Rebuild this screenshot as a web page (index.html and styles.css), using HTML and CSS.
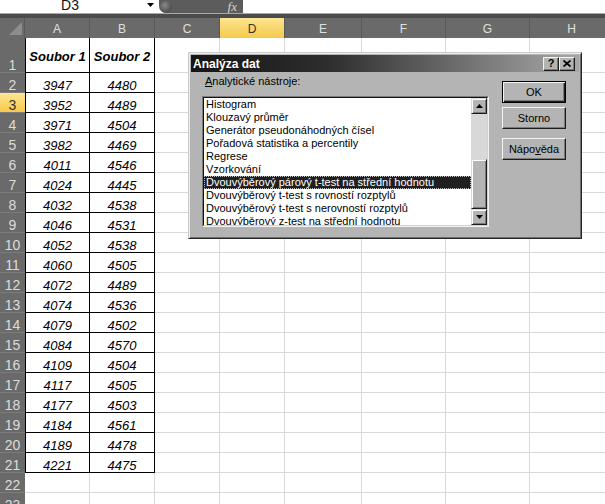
FILE: index.html
```html
<!DOCTYPE html>
<html lang="cs">
<head>
<meta charset="utf-8">
<title>Analýza dat</title>
<link rel="stylesheet" href="styles.css">
</head>
<body>
<div class="fbar">
  <div class="namebox"><span class="nb-text">D3</span><svg class="nb-arrow" width="7" height="4" viewBox="0 0 7 4"><path d="M0 0h7L3.5 4z" fill="#000"/></svg></div>
  <div class="pill"><span class="knob"></span><span class="fx">fx</span></div>
  <div class="finput"></div>
</div>
<div class="band"></div>
<div class="sheet">
  <div class="row hdr"><div class="corner"><i></i></div><div class="ch">A</div><div class="ch">B</div><div class="ch">C</div><div class="ch sel">D</div><div class="ch">E</div><div class="ch">F</div><div class="ch">G</div><div class="ch">H</div></div>
  <div class="row r1"><div class="rh">1</div><div class="c t a h">Soubor 1</div><div class="c t h">Soubor 2</div><div class="c"></div><div class="c"></div><div class="c"></div><div class="c"></div><div class="c"></div><div class="c"></div></div>
  <div class="row"><div class="rh">2</div><div class="c t a">3947</div><div class="c t">4480</div><div class="c"></div><div class="c"></div><div class="c"></div><div class="c"></div><div class="c"></div><div class="c"></div></div>
  <div class="row"><div class="rh sel">3</div><div class="c t a">3952</div><div class="c t">4489</div><div class="c"></div><div class="c"></div><div class="c"></div><div class="c"></div><div class="c"></div><div class="c"></div></div>
  <div class="row"><div class="rh">4</div><div class="c t a">3971</div><div class="c t">4504</div><div class="c"></div><div class="c"></div><div class="c"></div><div class="c"></div><div class="c"></div><div class="c"></div></div>
  <div class="row"><div class="rh">5</div><div class="c t a">3982</div><div class="c t">4469</div><div class="c"></div><div class="c"></div><div class="c"></div><div class="c"></div><div class="c"></div><div class="c"></div></div>
  <div class="row"><div class="rh">6</div><div class="c t a">4011</div><div class="c t">4546</div><div class="c"></div><div class="c"></div><div class="c"></div><div class="c"></div><div class="c"></div><div class="c"></div></div>
  <div class="row"><div class="rh">7</div><div class="c t a">4024</div><div class="c t">4445</div><div class="c"></div><div class="c"></div><div class="c"></div><div class="c"></div><div class="c"></div><div class="c"></div></div>
  <div class="row"><div class="rh">8</div><div class="c t a">4032</div><div class="c t">4538</div><div class="c"></div><div class="c"></div><div class="c"></div><div class="c"></div><div class="c"></div><div class="c"></div></div>
  <div class="row"><div class="rh">9</div><div class="c t a">4046</div><div class="c t">4531</div><div class="c"></div><div class="c"></div><div class="c"></div><div class="c"></div><div class="c"></div><div class="c"></div></div>
  <div class="row"><div class="rh">10</div><div class="c t a">4052</div><div class="c t">4538</div><div class="c"></div><div class="c"></div><div class="c"></div><div class="c"></div><div class="c"></div><div class="c"></div></div>
  <div class="row"><div class="rh">11</div><div class="c t a">4060</div><div class="c t">4505</div><div class="c"></div><div class="c"></div><div class="c"></div><div class="c"></div><div class="c"></div><div class="c"></div></div>
  <div class="row"><div class="rh">12</div><div class="c t a">4072</div><div class="c t">4489</div><div class="c"></div><div class="c"></div><div class="c"></div><div class="c"></div><div class="c"></div><div class="c"></div></div>
  <div class="row"><div class="rh">13</div><div class="c t a">4074</div><div class="c t">4536</div><div class="c"></div><div class="c"></div><div class="c"></div><div class="c"></div><div class="c"></div><div class="c"></div></div>
  <div class="row"><div class="rh">14</div><div class="c t a">4079</div><div class="c t">4502</div><div class="c"></div><div class="c"></div><div class="c"></div><div class="c"></div><div class="c"></div><div class="c"></div></div>
  <div class="row"><div class="rh">15</div><div class="c t a">4084</div><div class="c t">4570</div><div class="c"></div><div class="c"></div><div class="c"></div><div class="c"></div><div class="c"></div><div class="c"></div></div>
  <div class="row"><div class="rh">16</div><div class="c t a">4109</div><div class="c t">4504</div><div class="c"></div><div class="c"></div><div class="c"></div><div class="c"></div><div class="c"></div><div class="c"></div></div>
  <div class="row"><div class="rh">17</div><div class="c t a">4117</div><div class="c t">4505</div><div class="c"></div><div class="c"></div><div class="c"></div><div class="c"></div><div class="c"></div><div class="c"></div></div>
  <div class="row"><div class="rh">18</div><div class="c t a">4177</div><div class="c t">4503</div><div class="c"></div><div class="c"></div><div class="c"></div><div class="c"></div><div class="c"></div><div class="c"></div></div>
  <div class="row"><div class="rh">19</div><div class="c t a">4184</div><div class="c t">4561</div><div class="c"></div><div class="c"></div><div class="c"></div><div class="c"></div><div class="c"></div><div class="c"></div></div>
  <div class="row"><div class="rh">20</div><div class="c t a">4189</div><div class="c t">4478</div><div class="c"></div><div class="c"></div><div class="c"></div><div class="c"></div><div class="c"></div><div class="c"></div></div>
  <div class="row"><div class="rh">21</div><div class="c t a">4221</div><div class="c t">4475</div><div class="c"></div><div class="c"></div><div class="c"></div><div class="c"></div><div class="c"></div><div class="c"></div></div>
  <div class="row"><div class="rh">22</div><div class="c"></div><div class="c"></div><div class="c"></div><div class="c"></div><div class="c"></div><div class="c"></div><div class="c"></div><div class="c"></div></div>
  <div class="row"><div class="rh">23</div><div class="c"></div><div class="c"></div><div class="c"></div><div class="c"></div><div class="c"></div><div class="c"></div><div class="c"></div><div class="c"></div></div>
</div>

<div class="dialog">
  <div class="titlebar">
    <span class="title">Analýza dat</span>
    <span class="tbtn">?</span>
    <span class="tbtn"><svg width="8" height="7" viewBox="0 0 8 7"><path d="M0.5 0.5L7.5 6.5M7.5 0.5L0.5 6.5" stroke="#000" stroke-width="1.8"/></svg></span>
  </div>
  <div class="dbody">
    <div class="left">
      <div class="label"><u>A</u>nalytické nástroje:</div>
      <div class="listbox">
        <div class="listinner">
          <div class="items">
            <div class="item">Histogram</div>
            <div class="item">Klouzavý průměr</div>
            <div class="item">Generátor pseudonáhodných čísel</div>
            <div class="item">Pořadová statistika a percentily</div>
            <div class="item">Regrese</div>
            <div class="item">Vzorkování</div>
            <div class="item sel">Dvouvýběrový párový t-test na střední hodnotu</div>
            <div class="item">Dvouvýběrový t-test s rovností rozptylů</div>
            <div class="item">Dvouvýběrový t-test s nerovností rozptylů</div>
            <div class="item">Dvouvýběrový z-test na střední hodnotu</div>
          </div>
          <div class="sb">
            <div class="sbtn"><svg width="7" height="4" viewBox="0 0 7 4"><path d="M0 4h7L3.5 0z" fill="#000"/></svg></div>
            <div class="track"></div>
            <div class="thumb"></div>
            <div class="sbtn"><svg width="7" height="4" viewBox="0 0 7 4"><path d="M0 0h7L3.5 4z" fill="#000"/></svg></div>
          </div>
        </div>
      </div>
    </div>
    <div class="right">
      <div class="btn def">OK</div>
      <div class="btn">Storno</div>
      <div class="btn gap">Nápo<u>v</u>ěda</div>
    </div>
  </div>
</div>
</body>
</html>
```
FILE: styles.css
```css
* { box-sizing: border-box; }
html, body { margin: 0; padding: 0; }
body {
  width: 605px;
  height: 504px;
  overflow: hidden;
  background: #fff;
  position: relative;
  font-family: "Liberation Sans", Arial, sans-serif;
}

/* formula bar */
.fbar {
  display: flex;
  height: 14px;
  border-bottom: 1px solid #a9a9a9;
  background: #fff;
  overflow: hidden;
}
.namebox {
  width: 159px;
  display: flex;
  align-items: flex-start;
}
.nb-text {
  width: 140px;
  text-align: center;
  font-size: 14px;
  line-height: 10px;
  color: #111;
}
.nb-arrow { margin: 3px 0 0 7px; }
.pill {
  width: 84px;
  height: 13px;
  background: #5c5c5c;
  border-radius: 0 0 0 7px;
  display: flex;
  align-items: center;
  justify-content: space-between;
  padding: 0 6px 0 1px;
}
.knob {
  width: 12px;
  height: 12px;
  border-radius: 50%;
  background: radial-gradient(circle at 40% 35%, #8a8a8a 0%, #555 60%, #444 100%);
}
.fx {
  font-family: "Liberation Serif", serif;
  font-style: italic;
  font-size: 13px;
  line-height: 10px;
  color: #d6d6d6;
}
.finput { flex: 1; }
.band { height: 4px; background: #4b4b4b; }

/* sheet */
.sheet { width: 614px; }
.row {
  display: grid;
  grid-template-columns: 25px 65px 65px 65px 65px 77px 84px 84px 84px;
  height: 20px;
}
.row.r1 { height: 35px; }
.hdr { background: #6a6a6a; }
.corner {
  border-right: 1px solid #595959;
  display: flex;
  align-items: flex-end;
  justify-content: flex-end;
  padding: 0 2px 3px 0;
}
.corner i {
  display: block;
  width: 13px;
  height: 13px;
  background: #8d8d8d;
  clip-path: polygon(100% 0, 100% 100%, 0 100%);
}
.ch {
  border-right: 1px solid #595959;
  color: #e0e0e0;
  font-size: 12px;
  display: flex;
  align-items: center;
  justify-content: center;
  padding-top: 1px;
}
.ch.sel {
  background: linear-gradient(#fde592, #f6c94a);
  color: #333;
}
.rh {
  background: #6a6a6a;
  color: #dcdcdc;
  font-size: 14px;
  line-height: 13px;
  display: flex;
  align-items: flex-end;
  justify-content: center;
  border-bottom: 1px solid #7b7b7b;
}
.rh.sel {
  background: linear-gradient(#fde592, #f6c94a);
  color: #333;
}
.c {
  border-right: 1px solid #d9d9d9;
  border-bottom: 1px solid #d9d9d9;
}
.c.t {
  border-color: #000;
  display: flex;
  align-items: flex-end;
  justify-content: center;
  font-style: italic;
  font-size: 13px;
  line-height: 13px;
  color: #000;
}
.c.a { border-left: 1px solid #000; }
.c.h {
  align-items: center;
  font-weight: bold;
  line-height: normal;
  padding-top: 3px;
}

/* dialog */
.dialog {
  position: absolute;
  left: 188px;
  top: 52px;
  width: 394px;
  height: 187px;
  background: #b4b4b4;
  border: 1px solid;
  border-color: #cacaca #262626 #262626 #cacaca;
  box-shadow: inset 1px 1px 0 #ededed, inset -1px -1px 0 #6e6e6e;
  padding: 2px;
  display: flex;
  flex-direction: column;
  font-size: 11px;
  color: #000;
}
.titlebar {
  height: 17px;
  display: flex;
  align-items: center;
  padding: 0 4px 0 2px;
  background: linear-gradient(90deg, #151515 0%, #2d2d2d 35%, #a8a8a8 100%);
}
.title {
  flex: 1;
  color: #fff;
  font-weight: bold;
  font-size: 12px;
}
.tbtn {
  width: 16px;
  height: 14px;
  background: #b4b4b4;
  border: 1px solid;
  border-color: #f4f4f4 #1c1c1c #1c1c1c #f4f4f4;
  box-shadow: inset -1px -1px 0 #7a7a7a;
  display: flex;
  align-items: center;
  justify-content: center;
  font-weight: bold;
  font-size: 11px;
  line-height: 11px;
}
.dbody {
  flex: 1;
  display: flex;
  gap: 13px;
  padding: 0 13px 0 11px;
}
.left {
  width: 287px;
  display: flex;
  flex-direction: column;
}
.label {
  margin: 3px 0 0 3px;
  height: 13px;
  line-height: 13px;
}
.listbox {
  margin-top: 8px;
  height: 131px;
  border: 1px solid;
  border-color: #7c7c7c #f2f2f2 #f2f2f2 #7c7c7c;
}
.listinner {
  height: 100%;
  border: 1px solid;
  border-color: #141414 #d2d2d2 #d2d2d2 #141414;
  display: flex;
}
.items {
  flex: 1;
  background: #fff;
  overflow: hidden;
}
.item {
  height: 13px;
  line-height: 13px;
  padding-left: 2px;
  white-space: nowrap;
}
.item.sel {
  background: #1f1f1f;
  color: #fff;
  outline: 1px dotted #bdbdbd;
  outline-offset: -1px;
}
.sb {
  width: 16px;
  display: flex;
  flex-direction: column;
  background: #d8d8d8;
}
.sbtn, .thumb {
  background: #b4b4b4;
  border: 1px solid;
  border-color: #d8d8d8 #1c1c1c #1c1c1c #d8d8d8;
  box-shadow: inset 1px 1px 0 #fff, inset -1px -1px 0 #7a7a7a;
}
.sbtn {
  height: 16px;
  display: flex;
  align-items: center;
  justify-content: center;
}
.track { flex: 1; }
.thumb { height: 50px; }
.right {
  width: 64px;
  display: flex;
  flex-direction: column;
  gap: 4px;
  padding-top: 9px;
}
.btn {
  height: 22px;
  background: #b4b4b4;
  border: 1px solid;
  border-color: #f4f4f4 #1c1c1c #1c1c1c #f4f4f4;
  box-shadow: inset -1px -1px 0 #7a7a7a;
  display: flex;
  align-items: center;
  justify-content: center;
  font-size: 11px;
}
.btn.def {
  border-color: #000;
  box-shadow: inset 1px 1px 0 #f4f4f4, inset -1px -1px 0 #1c1c1c, inset -2px -2px 0 #7a7a7a;
}
.btn.gap { margin-top: 5px; }
```
